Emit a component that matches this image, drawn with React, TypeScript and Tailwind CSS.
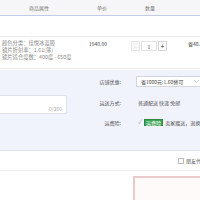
import { ChevronDown } from 'lucide-react';

const font = { fontFamily: '"Noto Sans CJK SC", "Noto Sans", sans-serif' };

function Stepper() {
  return (
    <div className="flex h-[10px] items-stretch text-[5px] leading-none">
      <div className="flex w-[9px] shrink-0 items-center justify-center border border-[#e5e5e5] bg-[#f7f7f7] text-[#ccc]">−</div>
      <div className="ml-[1px] flex w-[16px] shrink-0 items-center justify-center border border-[#e0e0e0] bg-white text-[#333]">1</div>
      <div className="ml-[1px] flex w-[9px] shrink-0 items-center justify-center border border-[#d6d6d6] bg-white text-[#333] text-[7px]">+</div>
    </div>
  );
}

export default function App() {
  return (
    <div className="relative h-[200px] w-[200px] overflow-hidden bg-white text-[5px] text-[#666]" style={font}>
      {/* table header */}
      <div className="flex h-[16px] items-center border-b border-[#c3cbe6] bg-[#f6f6f8] leading-none text-[#777]">
        <span className="w-[97px] shrink-0 pl-[29px]">商品属性</span>
        <span className="w-[48px] shrink-0">单价</span>
        <span className="shrink-0">数量</span>
      </div>

      <div className="h-[20px]" />

      {/* item row */}
      <div className="flex h-[33px] whitespace-nowrap border-t border-b border-[#ececec] leading-[7px]">
        <div className="w-[89px] shrink-0 pl-[2px] pt-[3px] text-[5.3px] text-[#8a8a8a]">
          <div>颜色分类：佳悦冰蓝膜</div>
          <div>镜片折射率：1.61(薄)</div>
          <div>镜片适合度数：400度 - 650度</div>
        </div>
        <div className="w-[42px] shrink-0 pt-[3px] text-[#444]">1940.00</div>
        <div className="w-[57px] shrink-0 pt-[4px]">
          <Stepper />
        </div>
        <div className="shrink-0 pt-[3px] text-[#444]">省40.00</div>
      </div>

      {/* lavender section */}
      <div className="mt-[1px] flex h-[81px] border-b border-[#dde1f0] bg-[#f1f3fc] whitespace-nowrap">
        <div className="w-[67px] shrink-0 pt-[25px]">
          <div className="-ml-[3px] flex h-[19px] items-end justify-end rounded-[2px] border border-[#dfe1e8] bg-white pb-[2px] pr-[4px] text-[#aaa] leading-none">
            0/200
          </div>
        </div>
        <div className="flex shrink-0 flex-col pl-[27px] pt-[1px] leading-none">
          <div className="flex h-[20px] items-center">
            <span className="w-[29px] shrink-0 text-right pr-[2px] text-[#555]">店铺优惠:</span>
            <div className="ml-[13px] flex h-[11px] w-[70px] shrink-0 items-center border border-[#d3d6de] bg-white pl-[4px] text-[#444]">
              <span>省1000元:1.60替可</span>
              <ChevronDown className="ml-[10px] h-[7px] w-[7px] text-[#888]" strokeWidth={1.5} />
            </div>
          </div>
          <div className="mt-[1px] flex h-[20px] items-center">
            <span className="w-[29px] shrink-0 text-right pr-[2px] text-[#555]">运送方式:</span>
            <span className="ml-[15px] text-[#555]">普通配送 快递 免邮</span>
          </div>
          <div className="flex h-[20px] items-center">
            <span className="w-[29px] shrink-0 text-right pr-[2px] text-[#555]">运费险:</span>
            <span className="ml-[15px] text-[6px] text-[#aaa]">✓</span>
            <span className="ml-[2px] flex h-[7px] items-center border border-[#2f8a45] bg-[#3ea657] px-[1px] text-white">运费险</span>
            <span className="ml-[2px] text-[#555]">卖家赠送，退换货可赔</span>
          </div>
        </div>
      </div>

      {/* friend pay row */}
      <div className="flex h-[20px] items-center justify-start border-b border-[#ececec] pl-[178px] whitespace-nowrap leading-none">
        <span className="h-[6px] w-[6px] shrink-0 border border-[#bbb] bg-white" />
        <span className="ml-[2px] shrink-0 text-[#555]">朋友代付</span>
      </div>

      {/* order summary box */}
      <div className="ml-[133px] mt-[5px] h-[40px] w-[80px] border-2 border-b-0 border-[#eacaca] bg-[#fffafa]" />
    </div>
  );
}
